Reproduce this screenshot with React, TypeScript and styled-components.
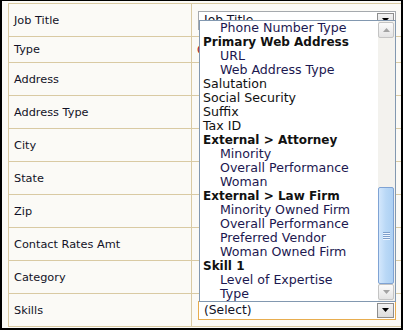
import styled, {createGlobalStyle} from 'styled-components';

const GlobalStyle = createGlobalStyle`
  html, body {
    margin: 0;
    padding: 0;
    background: #ffffff;
  }

  * {
    box-sizing: border-box;
  }
`

type Field = {
    label: string
    height: number
    control?: 'select' | 'marker' | 'open'
    value?: string
}

const fields: Field[] = [
    {label: 'Job Title', height: 32, control: 'select', value: 'Job Title'},
    {label: 'Type', height: 25, control: 'marker'},
    {label: 'Address', height: 32},
    {label: 'Address Type', height: 32},
    {label: 'City', height: 32},
    {label: 'State', height: 32},
    {label: 'Zip', height: 32},
    {label: 'Contact Rates Amt', height: 32},
    {label: 'Category', height: 32},
    {label: 'Skills', height: 32, control: 'open', value: '(Select)'},
]

type Option = {
    text: string
    kind: 'group' | 'child' | 'plain'
}

const options: Option[] = [
    {text: 'Phone Number Type', kind: 'child'},
    {text: 'Primary Web Address', kind: 'group'},
    {text: 'URL', kind: 'child'},
    {text: 'Web Address Type', kind: 'child'},
    {text: 'Salutation', kind: 'plain'},
    {text: 'Social Security', kind: 'plain'},
    {text: 'Suffix', kind: 'plain'},
    {text: 'Tax ID', kind: 'plain'},
    {text: 'External > Attorney', kind: 'group'},
    {text: 'Minority', kind: 'child'},
    {text: 'Overall Performance', kind: 'child'},
    {text: 'Woman', kind: 'child'},
    {text: 'External > Law Firm', kind: 'group'},
    {text: 'Minority Owned Firm', kind: 'child'},
    {text: 'Overall Performance', kind: 'child'},
    {text: 'Preferred Vendor', kind: 'child'},
    {text: 'Woman Owned Firm', kind: 'child'},
    {text: 'Skill 1', kind: 'group'},
    {text: 'Level of Expertise', kind: 'child'},
    {text: 'Type', kind: 'child'},
]

const Arrow = ({up, color}: {up?: boolean, color: string}) => (
    <svg width="7" height="4" viewBox="0 0 7 4">
        <path d={up ? 'M0 4 L3.5 0 L7 4 Z' : 'M0 0 L7 0 L3.5 4 Z'} fill={color}/>
    </svg>
)

const Dropdown = () => (
    <ListBox>
        <Items>
            {options.map((o, i) => (
                <Item key={i} $kind={o.kind}>{o.text}</Item>
            ))}
        </Items>
        <ScrollBar>
            <ScrollButton><Arrow up color="#a3a3a3"/></ScrollButton>
            <Track/>
            <Thumb>
                <Grip/>
                <Grip/>
                <Grip/>
                <Grip/>
            </Thumb>
            <ScrollButton><Arrow color="#a3a3a3"/></ScrollButton>
        </ScrollBar>
    </ListBox>
)

export default function App() {
    return (
        <>
            <GlobalStyle/>
            <Frame>
                <Table>
                    {fields.map(f => (
                        <Row key={f.label} $h={f.height}>
                            <Label>{f.label}</Label>
                            <ControlCell>
                                {f.control === 'marker' && <Marker>Commercial</Marker>}
                                {(f.control === 'select' || f.control === 'open') && (
                                    <Select $focused={f.control === 'open'}>
                                        <SelectValue>{f.value}</SelectValue>
                                        <DropButton><Arrow color="#000"/></DropButton>
                                        {f.control === 'open' && <Dropdown/>}
                                    </Select>
                                )}
                            </ControlCell>
                        </Row>
                    ))}
                </Table>
            </Frame>
        </>
    )
}

const Frame = styled.div`
  width: 403px;
  height: 330px;
  border-style: solid;
  border-color: #000;
  border-width: 1px 2px 2px 2px;
  background: #fbfaf6;
  padding: 2px 0 0 6px;
  overflow: hidden;
  font-family: "DejaVu Sans", Verdana, sans-serif;
  color: #121226;
`

const Table = styled.div`
  width: 420px;
  border-top: 1px solid #d9caa3;
  border-left: 1px solid #d9caa3;
`

const Row = styled.div<{ $h: number }>`
  display: grid;
  grid-template-columns: 183px 1fr;
  height: ${p => p.$h + 1}px;
  border-bottom: 1px solid #d9caa3;
`

const Label = styled.div`
  display: flex;
  align-items: center;
  padding-left: 5px;
  font-size: 11.3px;
  border-right: 1px solid #d9caa3;
`

const ControlCell = styled.div`
  display: flex;
  align-items: center;
  padding-left: 6px;
`

const Marker = styled.span`
  font-size: 12px;
  color: #a0202a;
  margin-left: -1px;
`

const Select = styled.div<{ $focused?: boolean }>`
  position: relative;
  width: 198px;
  height: 19px;
  display: flex;
  align-items: center;
  justify-content: space-between;
  background: #fff;
  border: 1px solid ${p => p.$focused ? '#e8ad4f' : '#a5a9ad'};
  padding-left: 5px;
  font-size: 12.3px;
`

const SelectValue = styled.span`
  line-height: 17px;
`

const DropButton = styled.div`
  width: 17px;
  height: 15px;
  margin-right: 1px;
  display: flex;
  align-items: center;
  justify-content: center;
  border: 1px solid #8d8d8d;
  background: linear-gradient(#f2f2f2, #dcdcdc);
`

const ListBox = styled.div`
  position: absolute;
  left: 0;
  bottom: 100%;
  width: 197px;
  height: 282px;
  display: flex;
  background: #fff;
  border: 1px solid #8298b0;
  z-index: 10;
`

const Items = styled.div`
  flex: 1;
  overflow: hidden;
`

const Item = styled.div<{ $kind: 'group' | 'child' | 'plain' }>`
  height: 14px;
  line-height: 14px;
  font-size: ${p => p.$kind === 'group' ? 12 : 12.6}px;
  white-space: nowrap;
  padding-left: ${p => p.$kind === 'child' ? 20 : 3}px;
  font-weight: ${p => p.$kind === 'group' ? 700 : 400};
  color: ${p => p.$kind === 'child' ? '#1c1850' : '#111'};
`

const ScrollBar = styled.div`
  width: 17px;
  display: flex;
  flex-direction: column;
  padding: 1px 1px 1px 0;
  background: #f3f2ee;
`

const ScrollButton = styled.div`
  height: 16px;
  display: flex;
  align-items: center;
  justify-content: center;
  border: 1px solid #c4c4c4;
  border-radius: 2px;
  background: linear-gradient(#fbfbfb, #e4e4e4);
`

const Track = styled.div`
  flex: 1;
`

const Thumb = styled.div`
  height: 97px;
  display: flex;
  flex-direction: column;
  align-items: center;
  justify-content: center;
  gap: 1px;
  border: 1px solid #7fa3d4;
  border-radius: 2px;
  background: linear-gradient(to right, #d3e7fc, #b9d8f6 50%, #add0f3);
`

const Grip = styled.div`
  width: 7px;
  height: 1px;
  background: #7d9fcc;
  box-shadow: 0 1px 0 #eef6ff;
`
